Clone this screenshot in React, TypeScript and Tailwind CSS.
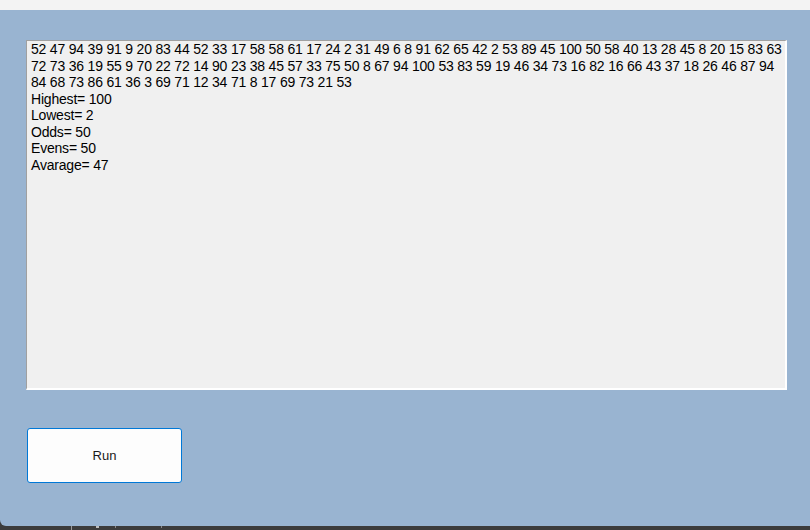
import React from 'react';

const lines = [
  '52 47 94 39 91 9 20 83 44 52 33 17 58 58 61 17 24 2 31 49 6 8 91 62 65 42 2 53 89 45 100 50 58 40 13 28 45 8 20 15 83 63',
  '72 73 36 19 55 9 70 22 72 14 90 23 38 45 57 33 75 50 8 67 94 100 53 83 59 19 46 34 73 16 82 16 66 43 37 18 26 46 87 94',
  '84 68 73 86 61 36 3 69 71 12 34 71 8 17 69 73 21 53',
  'Highest= 100',
  'Lowest= 2',
  'Odds= 50',
  'Evens= 50',
  'Avarage= 47',
];

export default function App() {
  return (
    <div
      className="w-[810px] h-[530px] flex flex-col bg-[#3c3c3c] overflow-hidden"
      style={{ fontFamily: '"Liberation Sans", Arial, sans-serif' }}
    >
      {/* title strip */}
      <div className="h-[10px] bg-[#f3f3f3]" />

      <div className="h-[516px] bg-[#99b4d1] rounded-bl-[6px] pt-[30px] pl-[26px] pr-[23px]">
        {/* output box */}
        <div className="h-[350px] bg-[#f0f0f0] border-t border-l border-[#a0a0a0] border-r-2 border-b-2 border-r-white border-b-white pl-[4px] text-[14px] leading-[16.5px] tracking-[-0.2px] text-black whitespace-pre">
          {lines.map((l, i) => (
            <div key={i}>{l}</div>
          ))}
        </div>

        <button className="mt-[38px] ml-[1px] w-[155px] h-[55px] bg-[#fdfdfd] border border-[#0078d7] rounded-[3px] text-[13px] text-[#1a1a1a] flex items-center justify-center">
          Run
        </button>
      </div>

      {/* taskbar edge */}
      <div className="flex-1 flex items-start">
        <div className="ml-[71px] w-px h-full bg-[#9a9a9a]" />
        <div className="ml-[24px] w-[3px] h-[2px] bg-[#bdbdbd]" />
        <div className="ml-[16px] w-px h-[2px] bg-[#8a8a8a]" />
        <div className="ml-[45px] w-px h-[2px] bg-[#8a8a8a]" />
      </div>
    </div>
  );
}
